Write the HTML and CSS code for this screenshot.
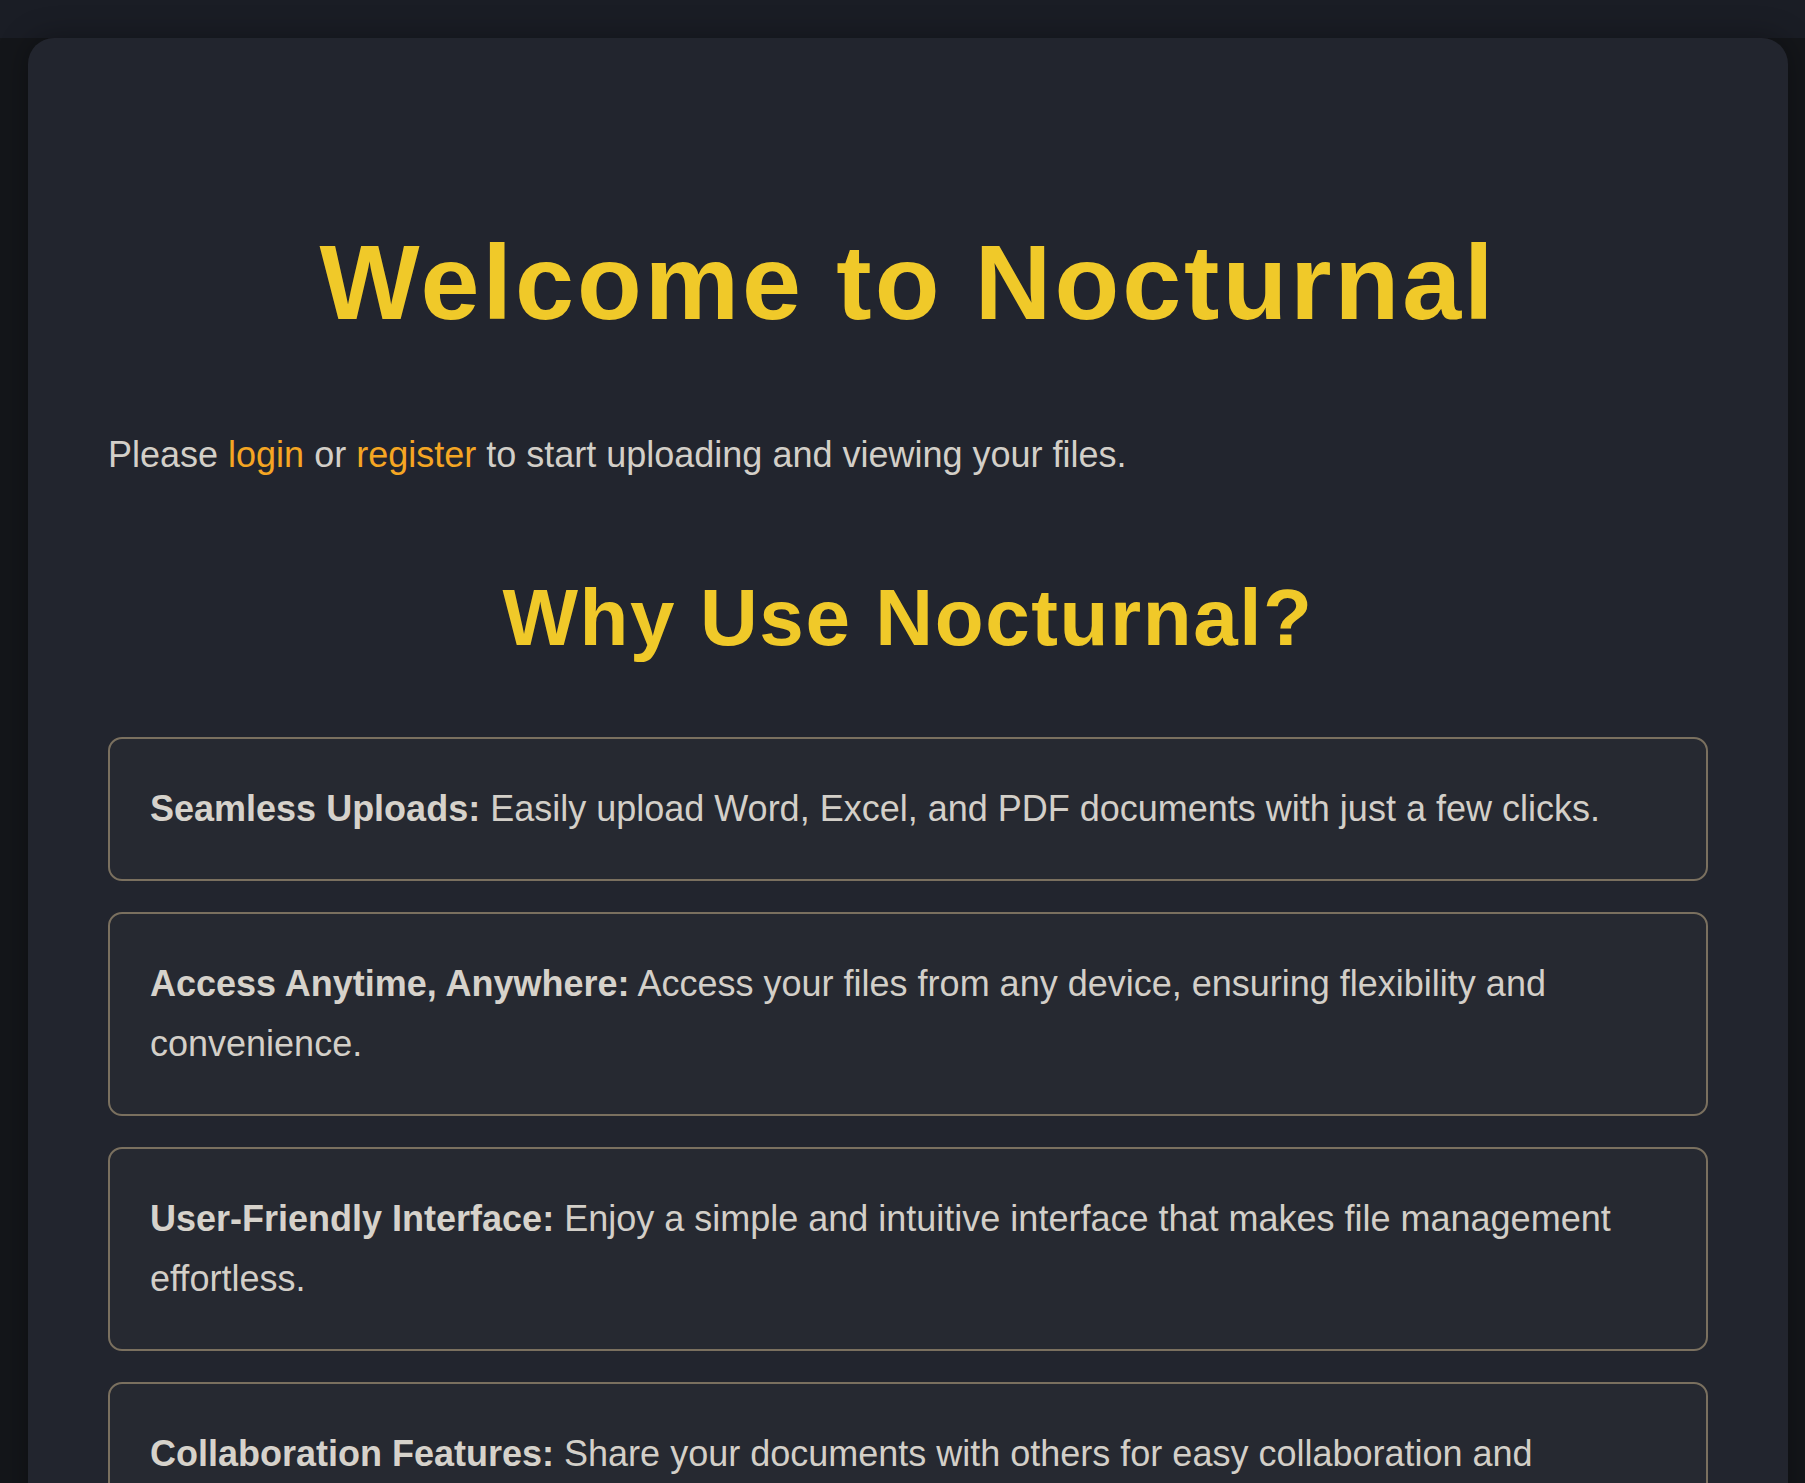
FILE: index.html
```html
<!DOCTYPE html>
<html lang="en">
<head>
<meta charset="utf-8">
<title>Nocturnal</title>
<link rel="stylesheet" href="styles.css">
</head>
<body>
<header class="topbar"></header>
<main class="card">
  <h1 class="title">Welcome to Nocturnal</h1>
  <p class="intro">Please <a href="#" class="link">login</a> or <a href="#" class="link">register</a> to start uploading and viewing your files.</p>
  <h2 class="subtitle">Why Use Nocturnal?</h2>
  <ul class="features">
    <li class="feature"><strong>Seamless Uploads:</strong> Easily upload Word, Excel, and PDF documents with just a few clicks.</li>
    <li class="feature"><strong>Access Anytime, Anywhere:</strong> Access your files from any device, ensuring flexibility and convenience.</li>
    <li class="feature"><strong>User-Friendly Interface:</strong> Enjoy a simple and intuitive interface that makes file management effortless.</li>
    <li class="feature"><strong>Collaboration Features:</strong> Share your documents with others for easy collaboration and teamwork.</li>
  </ul>
</main>
</body>
</html>
```

FILE: styles.css
```css
html, body {
  margin: 0;
  padding: 0;
}
body {
  background: #14161a;
  font-family: "Liberation Sans", Arial, sans-serif;
  color: #d3cfc8;
  min-height: 1483px;
}
.topbar {
  height: 38px;
  background: #1a1d25;
}
.card {
  margin: 0 17px 0 28px;
  background: #22252e;
  border-radius: 26px 26px 0 0;
  padding: 0 80px 80px 80px;
  box-shadow: 0 0 30px rgba(0, 0, 0, 0.35);
}
.title {
  margin: 0;
  padding-top: 182px;
  font-size: 106px;
  line-height: 125px;
  font-weight: bold;
  letter-spacing: 3px;
  color: #f0c929;
  text-align: center;
}
.intro {
  margin: 80px 0 0;
  font-size: 36px;
  line-height: 60px;
}
.link {
  color: #f5a623;
  text-decoration: none;
}
.subtitle {
  margin: 86px 0 0;
  font-size: 80px;
  line-height: 94px;
  font-weight: bold;
  letter-spacing: 1.6px;
  color: #f0c929;
  text-align: center;
}
.features {
  list-style: none;
  margin: 72px 0 0;
  padding: 0;
  display: flex;
  flex-direction: column;
  gap: 31px;
}
.feature {
  background: #262931;
  border: 2px solid #7a705f;
  border-radius: 14px;
  padding: 40px;
  font-size: 36px;
  line-height: 60px;
}
.feature strong {
  color: #d6d2cb;
}
```
